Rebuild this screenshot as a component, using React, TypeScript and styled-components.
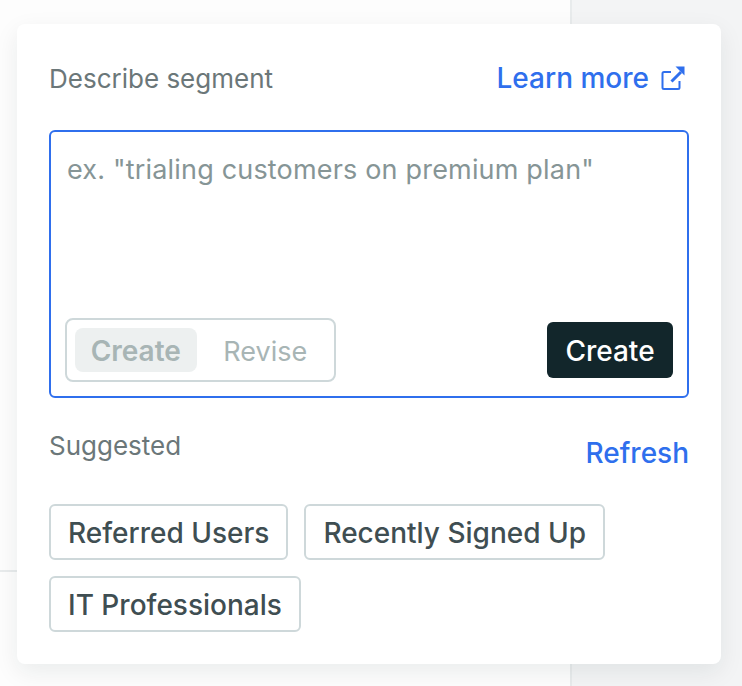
import { createGlobalStyle } from 'styled-components';
import styled from 'styled-components';

const GlobalStyle = createGlobalStyle`
  html, body {
    margin: 0;
    padding: 0;
    background: #ffffff;
  }
  * {
    box-sizing: border-box;
  }
`;

const Page = styled.div`
  width: 742px;
  height: 686px;
  overflow: hidden;
  padding: 24px 21px 22px 17px;
  font-family: Inter, 'Liberation Sans', sans-serif;
  background:
    linear-gradient(#e8ebec, #e8ebec) 570px 0 / 2px 100% no-repeat,
    linear-gradient(#e8ebec, #e8ebec) 0 570px / 570px 2px no-repeat,
    linear-gradient(#f3f4f5, #f3f4f5) 572px 0 / 170px 100% no-repeat,
    #fdfdfd;
`;

const Card = styled.div`
  width: 704px;
  height: 640px;
  padding: 32px 32px 0;
  background: #ffffff;
  border-radius: 8px;
  box-shadow: 0 8px 24px rgba(18, 38, 43, 0.08);
`;

const HeaderRow = styled.div`
  display: flex;
  align-items: center;
  justify-content: space-between;
  height: 44px;
  padding-right: 4px;
`;

const Label = styled.span`
  padding-top: 1px;
  font-size: 26px;
  line-height: 30px;
  font-weight: 400;
  color: #6b7779;
`;

const LearnMore = styled.a`
  display: flex;
  align-items: center;
  gap: 12px;
  font-size: 28px;
  font-weight: 550;
  color: #2f6fed;
`;

const Composer = styled.div`
  display: flex;
  flex-direction: column;
  justify-content: space-between;
  height: 268px;
  margin-top: 30px;
  padding: 18px 14px 14px;
  border: 2px solid #2f6fed;
  border-radius: 6px;
`;

const Placeholder = styled.div`
  padding-left: 2px;
  font-size: 27px;
  letter-spacing: 0.18px;
  line-height: 40px;
  color: #869596;
`;

const ComposerFooter = styled.div`
  display: flex;
  align-items: center;
  justify-content: space-between;
`;

const ModeSwitch = styled.div`
  display: flex;
  gap: 8px;
  width: 271px;
  height: 64px;
  padding: 8px;
  border: 2px solid #ced8da;
  border-radius: 8px;
`;

const ModeOption = styled.div<{ $active?: boolean }>`
  display: flex;
  align-items: center;
  justify-content: center;
  width: 122px;
  padding-top: 2px;
  border-radius: 8px;
  font-size: ${(p) => (p.$active ? '28px' : '27px')};
  font-weight: ${(p) => (p.$active ? 600 : 400)};
  color: #a8b5b5;
  background: ${(p) => (p.$active ? '#edf0f0' : 'transparent')};
`;

const CreateButton = styled.button`
  width: 126px;
  height: 56px;
  padding: 2px 0 0;
  border: 0;
  border-radius: 6px;
  background: #12262b;
  color: #ffffff;
  font-family: inherit;
  font-size: 28px;
  font-weight: 550;
`;

const SuggestedRow = styled.div`
  display: flex;
  justify-content: space-between;
  height: 40px;
  margin-top: 32px;
`;

const Refresh = styled.a`
  align-self: flex-end;
  font-size: 28px;
  line-height: 34px;
  font-weight: 550;
  color: #2f6fed;
`;

const Chips = styled.div`
  display: flex;
  flex-wrap: wrap;
  gap: 16px;
  margin-top: 34px;
`;

const Chip = styled.div`
  display: flex;
  align-items: center;
  height: 56px;
  padding: 2px 17px 0;
  border: 2px solid #ced8da;
  border-radius: 6px;
  font-size: 28px;
  font-weight: 550;
  color: #3f4e52;
`;

function ExternalIcon() {
  return (
    <svg width="24" height="24" viewBox="0 0 24 24" fill="none" stroke="#2f6fed" strokeWidth="2">
      <path d="M10 6H3a1.500 1.500 0 0 0-1.500 1.500V21.500A1.500 1.500 0 0 0 3 23h14a1.500 1.500 0 0 0 1.500-1.500V15" />
      <path d="M10.500 15.500 20 6" strokeWidth="3" />
      <path d="M14.500 0.500h9v9z" fill="#2f6fed" stroke="none" />
    </svg>
  );
}

export default function App() {
  return (
    <Page>
      <GlobalStyle />
      <Card>
        <HeaderRow>
          <Label>Describe segment</Label>
          <LearnMore>
            Learn more
            <ExternalIcon />
          </LearnMore>
        </HeaderRow>
        <Composer>
          <Placeholder>ex. "trialing customers on premium plan"</Placeholder>
          <ComposerFooter>
            <ModeSwitch>
              <ModeOption $active>Create</ModeOption>
              <ModeOption>Revise</ModeOption>
            </ModeSwitch>
            <CreateButton>Create</CreateButton>
          </ComposerFooter>
        </Composer>
        <SuggestedRow>
          <Label>Suggested</Label>
          <Refresh>Refresh</Refresh>
        </SuggestedRow>
        <Chips>
          <Chip>Referred Users</Chip>
          <Chip>Recently Signed Up</Chip>
          <Chip>IT Professionals</Chip>
        </Chips>
      </Card>
    </Page>
  );
}
